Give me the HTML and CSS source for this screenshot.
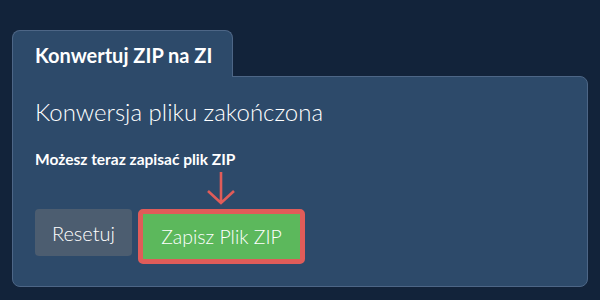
FILE: index.html
```html
<!DOCTYPE html>
<html lang="pl">
<head>
    <meta charset="UTF-8">
    <meta name="viewport" content="width=device-width, initial-scale=1.0">
    <title>Konwertuj ZIP na ZI</title>
    <link rel="stylesheet" href="styles.css">
</head>
<body>
<div class="container">
    <div class="tab">Konwertuj ZIP na ZI</div>
    <div class="panel">
        <h2 class="panel-title">Konwersja pliku zakończona</h2>
        <p class="panel-note">Możesz teraz zapisać plik ZIP</p>
        <div class="actions">
            <button type="button" class="btn btn-reset">Resetuj</button>
            <div class="save-wrap">
                <svg class="hint-arrow" width="30" height="34" viewBox="0 0 30 34">
                    <path d="M15 1 V32 M2 20 L15 32 L28 20" fill="none" stroke="#e05c59" stroke-width="2.6"/>
                </svg>
                <button type="button" class="btn btn-save">Zapisz Plik ZIP</button>
            </div>
        </div>
    </div>
</div>
</body>
</html>
```

FILE: styles.css
```css
:root {
    --bg: #12233a;
    --panel: #2d4a6a;
    --edge: #4d6686;
    --light: #fff;
    --gray: #4c5d70;
    --green: #5cb85c;
    --red: #e05c59;
}
* {
    margin: 0;
    padding: 0;
    box-sizing: border-box;
    font-family: 'Lato', sans-serif;
}
body {
    background: var(--bg);
    color: var(--light);
    min-height: 100vh;
}
.container {
    padding: 30px 12px 0 12px;
}
.tab {
    position: relative;
    z-index: 1;
    width: 221px;
    height: 47px;
    margin-bottom: -1px;
    padding: 12px 0 0 22px;
    background: var(--panel);
    border: 1px solid var(--edge);
    border-bottom: none;
    border-radius: 8px 8px 0 0;
    font-size: 20px;
    font-weight: 700;
    line-height: 24px;
}
.panel {
    height: 211px;
    padding: 19px 22px 0 22px;
    background: var(--panel);
    border: 1px solid var(--edge);
    border-radius: 0 8px 8px 8px;
}
.panel-title {
    font-size: 24px;
    font-weight: 300;
    line-height: 32px;
    color: var(--light);
}
.panel-note {
    margin-top: 21px;
    font-size: 15.5px;
    font-weight: 700;
    line-height: 20px;
}
.actions {
    display: flex;
    align-items: flex-start;
    gap: 6px;
    margin-top: 40px;
}
.btn {
    border: none;
    border-radius: 4px;
    color: var(--light);
    font-family: 'Lato', sans-serif;
    font-weight: 300;
    cursor: pointer;
}
.btn-reset {
    width: 97px;
    height: 47px;
    background: var(--gray);
    font-size: 20px;
}
.save-wrap {
    position: relative;
}
.hint-arrow {
    position: absolute;
    left: 68px;
    top: -38px;
}
.btn-save {
    width: 167px;
    height: 55px;
    background: var(--green);
    border: 5px solid var(--red);
    border-radius: 5px;
    font-size: 19.5px;
}
```
